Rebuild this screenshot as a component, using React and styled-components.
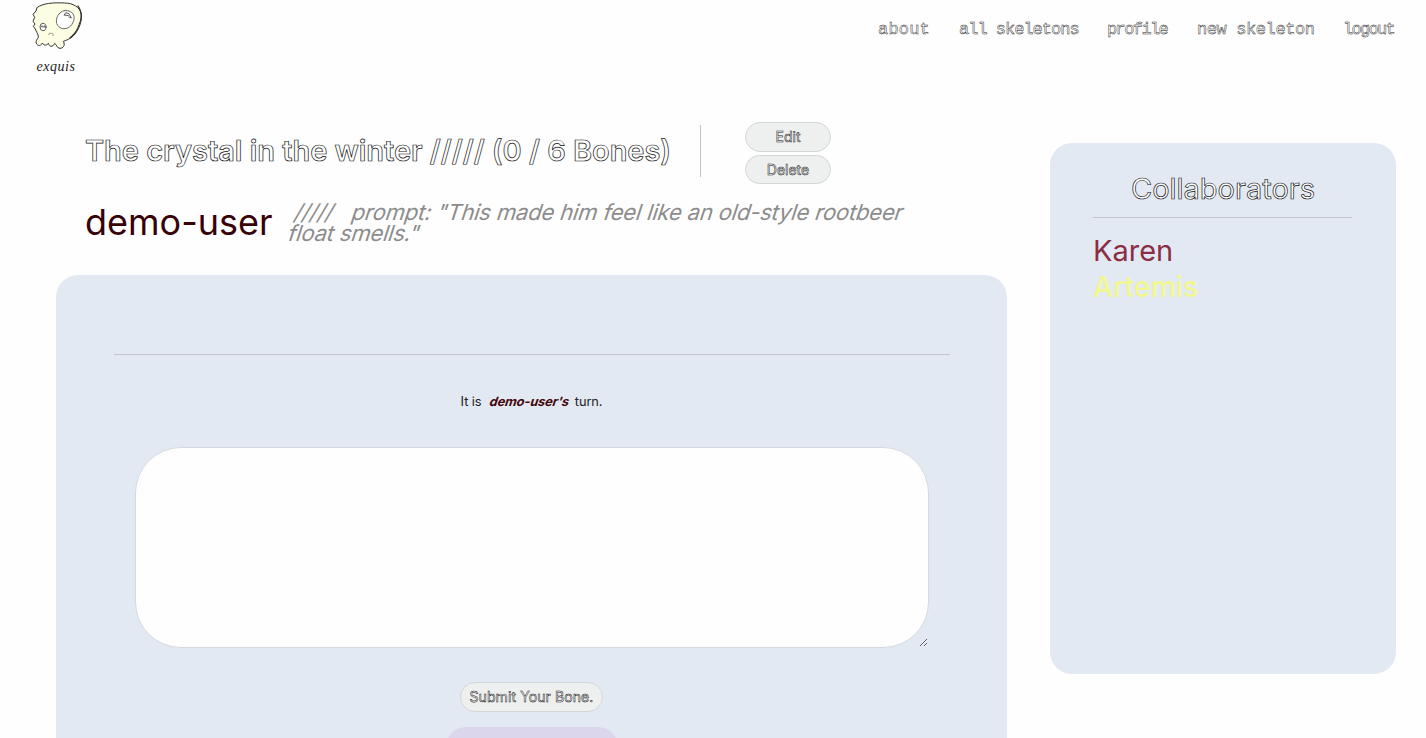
import React from "react";
import styled, { createGlobalStyle } from "styled-components";

const Global = createGlobalStyle`
  * { box-sizing: border-box; }
  html, body { margin: 0; background: #fefefe; }
  body { font-family: Inter, "Liberation Sans", sans-serif; color: #111; overflow: hidden; }
`;

const Page = styled.div`
  height: 738px;
  overflow: hidden;
  display: flex;
  flex-direction: column;
`;

const Header = styled.header`
  height: 122px;
  flex: none;
  display: flex;
  justify-content: space-between;
  padding: 0 31px 0 29px;
`;

const Brand = styled.a`
  width: 54px;
  display: flex;
  flex-direction: column;
  align-items: center;
`;

const BrandName = styled.span`
  font: italic 14px/16px "Liberation Serif", serif;
  letter-spacing: 0.5px;
  margin-top: 9px;
  color: #222;
`;

const Nav = styled.nav`
  display: flex;
  gap: 29px;
  padding-top: 19px;
`;

const NavLink = styled.a`
  width: ${(p) => p.$width}px;
  font: 17px/22px "Liberation Mono", monospace;
  letter-spacing: ${(p) => p.$spacing}px;
  white-space: pre;
  color: #fff;
  -webkit-text-stroke: 0.45px #222;
`;

const Main = styled.main`
  display: grid;
  grid-template-columns: 951px 346px;
  column-gap: 43px;
  padding-left: 56px;
`;

const Story = styled.section`
  display: flex;
  flex-direction: column;
`;

const TitleRow = styled.div`
  display: flex;
  height: 62px;
  padding-left: 29px;
`;

const Title = styled.h1`
  width: 616px;
  margin: 3px 0 0;
  height: 52px;
  line-height: 52px;
  border-right: 1px solid #c4c4c4;
  font-size: 29px;
  font-weight: 600;
  letter-spacing: -0.04px;
  white-space: nowrap;
  color: #fff;
  -webkit-text-stroke: 0.7px #111;
`;

const Actions = styled.div`
  display: flex;
  flex-direction: column;
  gap: 3px;
  margin-left: 44px;
`;

const Button = styled.button`
  width: ${(p) => p.$width || 86}px;
  height: 29.5px;
  padding: 0;
  border: 1px solid #d3d5d8;
  border-radius: 15px;
  background: #eeefef;
  font: 400 14px/28px Inter, sans-serif;
  letter-spacing: ${(p) => p.$spacing || 0}px;
  white-space: nowrap;
  color: #fff;
  -webkit-text-stroke: 0.5px #111;
`;

const Byline = styled.div`
  display: flex;
  height: 90px;
  padding: 17px 0 0 29px;
`;

const Author = styled.span`
  width: 202px;
  font-size: 36px;
  line-height: 43px;
  color: #360207;
`;

const Prompt = styled.p`
  width: 660px;
  margin: 0;
  padding-top: 1px;
  display: flex;
  flex-direction: column;
  align-items: flex-start;
  font-size: 22px;
  line-height: 21px;
  letter-spacing: -0.19px;
  word-spacing: 0.15px;
  color: #8c8c8c;
  white-space: pre;
`;

const Slanted = styled.span`
  display: inline-block;
  transform: skewX(-18deg);
  transform-origin: 0 80%;
`;

const Board = styled.div`
  height: 520px;
  border-radius: 22px;
  background: #e2e9f3;
  display: flex;
  flex-direction: column;
  align-items: center;
  margin-top: 1px;
`;

const Rule = styled.hr`
  width: ${(p) => p.$width}px;
  height: 1px;
  margin: ${(p) => p.$top}px 0 0;
  border: 0;
  flex: none;
  background: #c2c4d2;
`;

const Turn = styled.p`
  margin: 38px 0 0;
  font-size: 12.8px;
  line-height: 18px;
  white-space: pre;
  color: #222;
  letter-spacing: -0.1px;
`;

const TurnUser = styled(Slanted).attrs({ as: "strong" })`
  color: #42070c;
`;

const Draft = styled.textarea`
  width: 794px;
  height: 201px;
  flex: none;
  margin: 36px 0 34px;
  border: 1px solid #d5d9df;
  border-radius: 46px;
  background: #fefefe;
  resize: both;
  outline: none;
`;

const Notice = styled.div`
  width: 172px;
  height: 40px;
  flex: none;
  margin-top: 15px;
  border-radius: 20px;
  background: #dcd6ed;
`;

const Sidebar = styled.aside`
  height: 531px;
  margin-top: 21px;
  padding: 27px 43px;
  border-radius: 22px;
  background: #e2e9f3;
`;

const SideTitle = styled.h2`
  margin: 0;
  font-size: 29px;
  line-height: 38px;
  font-weight: 400;
  text-align: center;
  color: #fff;
  -webkit-text-stroke: 0.7px #111;
`;

const People = styled.ul`
  list-style: none;
  margin: 15px 0 0;
  padding: 0;
`;

const Person = styled.li`
  font-size: ${(p) => (p.$weight ? 28.4 : 29)}px;
  line-height: 36px;
  font-weight: ${(p) => p.$weight || 400};
  color: ${(p) => p.$color};
`;

const Skull = () => (
  <svg width="54" height="50" viewBox="87 0 162 150" fill="none" stroke="#333" strokeWidth="3" strokeLinejoin="round" strokeLinecap="round">
    <path fill="#fdfde3" d="M112 22 C128 10 160 7 193 9 C220 9 240 22 244 42 C246 62 239 82 228 98 C218 113 205 119 190 124 C197 136 189 145 180 145 C170 145 170 133 164 130 C158 143 148 141 145 130 C139 139 130 135 127 129 C121 142 109 136 108 126 C108 119 117 114 115 108 C112 98 108 94 106 87 L100 79 L105 72 L99 64 L104 52 L99 43 L107 34 Z" />
    <path d="M234 18 C246 36 246 54 237 75 C232 91 222 105 208 115" strokeWidth="4" strokeDasharray="7 3" />
    <path d="M195 32 C177 34 166 54 170 70 C176 88 198 91 212 78 C223 65 226 49 217 39 C210 33 202 31 195 32 Z" fill="#fff" strokeWidth="2.4" strokeDasharray="6 3" />
    <path d="M193 45 L197 38 L207 41 L214 54 L207 51 M193 45 L205 47" strokeWidth="2.4" />
    <ellipse cx="129" cy="81" rx="9" ry="11" fill="#fff" strokeWidth="2.4" />
    <path d="M123 82 L126 77 L129 82 L133 77 L135 83" strokeWidth="2" />
    <path d="M146 104 Q148 96 152 99 M155 100 Q161 98 159 107" stroke="#666" strokeWidth="2" />
  </svg>
);

const links = [
  { label: "about", width: 52, spacing: 0.2 },
  { label: "all skeletons", width: 119, spacing: -1 },
  { label: "profile", width: 61, spacing: -1.6 },
  { label: "new skeleton", width: 117, spacing: -0.4 },
  { label: "logout", width: 52, spacing: -1.7 },
];

export default function App() {
  return (
    <Page>
      <Global />
      <Header>
        <Brand>
          <Skull />
          <BrandName>exquis</BrandName>
        </Brand>
        <Nav>
          {links.map((l) => (
            <NavLink key={l.label} $width={l.width} $spacing={l.spacing}>{l.label}</NavLink>
          ))}
        </Nav>
      </Header>
      <Main>
        <Story>
          <TitleRow>
            <Title>The crystal in the winter ///// (0 / 6 Bones)</Title>
            <Actions>
              <Button>Edit</Button>
              <Button>Delete</Button>
            </Actions>
          </TitleRow>
          <Byline>
            <Author>demo-user</Author>
            <Prompt>
              <Slanted>{' /////   prompt: "This made him feel like an old-style rootbeer'}</Slanted>
              <Slanted>float smells."</Slanted>
            </Prompt>
          </Byline>
          <Board>
            <Rule $width={836} $top={79} />
            <Turn>It is  <TurnUser>demo-user's</TurnUser>  turn.</Turn>
            <Draft />
            <Button $width={143} $spacing={0.1}>Submit Your Bone.</Button>
            <Notice />
          </Board>
        </Story>
        <Sidebar>
          <SideTitle>Collaborators</SideTitle>
          <Rule $width={259} $top={9} />
          <People>
            <Person $color="#8b2e43">Karen</Person>
            <Person $color="#f3f78e" $weight={500}>Artemis</Person>
          </People>
        </Sidebar>
      </Main>
    </Page>
  );
}
